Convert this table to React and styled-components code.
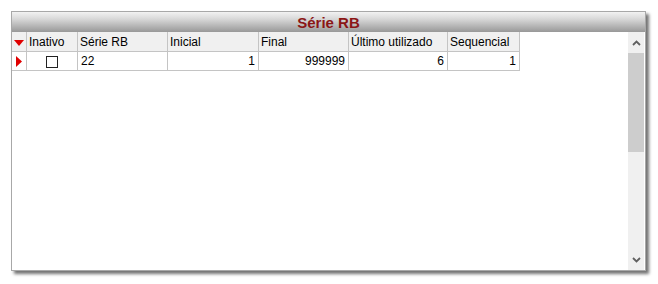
import React from 'react';
import styled, { createGlobalStyle } from 'styled-components';

const GlobalStyle = createGlobalStyle`
	html, body {
		margin: 0;
		padding: 0;
		background: #ffffff;
	}
	body {
		font-family: Tahoma, "DejaVu Sans", "Liberation Sans", sans-serif;
	}
`;

const Page = styled.div`
	padding: 11px;
`;

const Panel = styled.div`
	width: 633px;
	height: 258px;
	border: 1px solid #a8a8a8;
	background: #fff;
	display: flex;
	flex-direction: column;
	box-shadow: 3px 3px 3px rgba(0, 0, 0, 0.55);
`;

const TitleBar = styled.div`
	height: 20px;
	flex: none;
	display: flex;
	align-items: center;
	justify-content: center;
	background: linear-gradient(#f2f2f2, #d8d8d8 35%, #989898);
	color: #8b1616;
	font-family: "Liberation Sans", Arial, sans-serif;
	font-weight: bold;
	font-size: 15px;
`;

const Body = styled.div`
	flex: 1;
	display: flex;
	min-height: 0;
`;

const GridArea = styled.div`
	flex: 1;
`;

const Table = styled.table`
	border-collapse: collapse;
	table-layout: fixed;
	font-family: "Liberation Sans", Arial, sans-serif;
	font-size: 12px;
	color: #000;
`;

const HeadCell = styled.th`
	width: ${p => p.$w}px;
	height: 19px;
	padding: 0 2px;
	background: #f0f0f0;
	border: 1px solid #c4c4c4;
	border-top: none;
	border-left: ${p => (p.$first ? 'none' : '1px solid #c4c4c4')};
	font-weight: normal;
	text-align: left;
	white-space: nowrap;
	overflow: hidden;
`;

const Cell = styled.td`
	height: 18px;
	padding: 0 3px 0 3px;
	border: 1px solid #c4c4c4;
	border-left: ${p => (p.$first ? 'none' : '1px solid #c4c4c4')};
	text-align: ${p => p.$align || 'left'};
	white-space: nowrap;
`;

const Indicator = styled.div`
	display: flex;
	justify-content: flex-start;
	padding-left: 1px;
`;

const CheckBox = styled.span`
	display: inline-block;
	width: 10px;
	height: 10px;
	border: 1px solid #222;
	background: #fff;
	vertical-align: middle;
`;

const ScrollBar = styled.div`
	width: 16px;
	flex: none;
	background: #f0f0f0;
	display: flex;
	flex-direction: column;
	margin-right: 1px;
`;

const Arrow = styled.div`
	height: 21px;
	flex: none;
	display: flex;
	align-items: center;
	justify-content: center;
`;

const Thumb = styled.div`
	height: 99px;
	background: #cdcdcd;
`;

const Track = styled.div`
	flex: 1;
`;

const Chevron = ({ up }) => (
	<svg width="9" height="6" viewBox="0 0 9 6">
		<path
			d={up ? 'M1 5 L4.5 1.5 L8 5' : 'M1 1 L4.5 4.5 L8 1'}
			fill="none"
			stroke="#606060"
			strokeWidth="1.8"
		/>
	</svg>
);

const columns = [
	{ key: 'ind', label: '', w: 10 },
	{ key: 'inativo', label: 'Inativo', w: 46 },
	{ key: 'serie', label: 'Série RB', w: 85 },
	{ key: 'inicial', label: 'Inicial', w: 86 },
	{ key: 'final', label: 'Final', w: 85 },
	{ key: 'ultimo', label: 'Último utilizado', w: 94 },
	{ key: 'seq', label: 'Sequencial', w: 67 },
];

const App = () => {
	return (
		<Page>
			<GlobalStyle />
			<Panel>
				<TitleBar>Série RB</TitleBar>
				<Body>
					<GridArea>
						<Table>
							<thead>
								<tr>
									{columns.map((c, i) => (
										<HeadCell key={c.key} $w={c.w} $first={i === 0}>
											{i === 0 ? (
												<svg width="10" height="6" viewBox="0 0 10 6">
													<polygon points="0,0 10,0 5,6" fill="#e00000" />
												</svg>
											) : (
												c.label
											)}
										</HeadCell>
									))}
								</tr>
							</thead>
							<tbody>
								<tr>
									<Cell $first>
										<Indicator>
											<svg width="6" height="11" viewBox="0 0 6 11">
												<polygon points="0,0 6,5.5 0,11" fill="#e00000" />
											</svg>
										</Indicator>
									</Cell>
									<Cell $align="center">
										<CheckBox />
									</Cell>
									<Cell>22</Cell>
									<Cell $align="right">1</Cell>
									<Cell $align="right">999999</Cell>
									<Cell $align="right">6</Cell>
									<Cell $align="right">1</Cell>
								</tr>
							</tbody>
						</Table>
					</GridArea>
					<ScrollBar>
						<Arrow>
							<Chevron up />
						</Arrow>
						<Thumb />
						<Track />
						<Arrow>
							<Chevron />
						</Arrow>
					</ScrollBar>
				</Body>
			</Panel>
		</Page>
	);
};

export default App;
